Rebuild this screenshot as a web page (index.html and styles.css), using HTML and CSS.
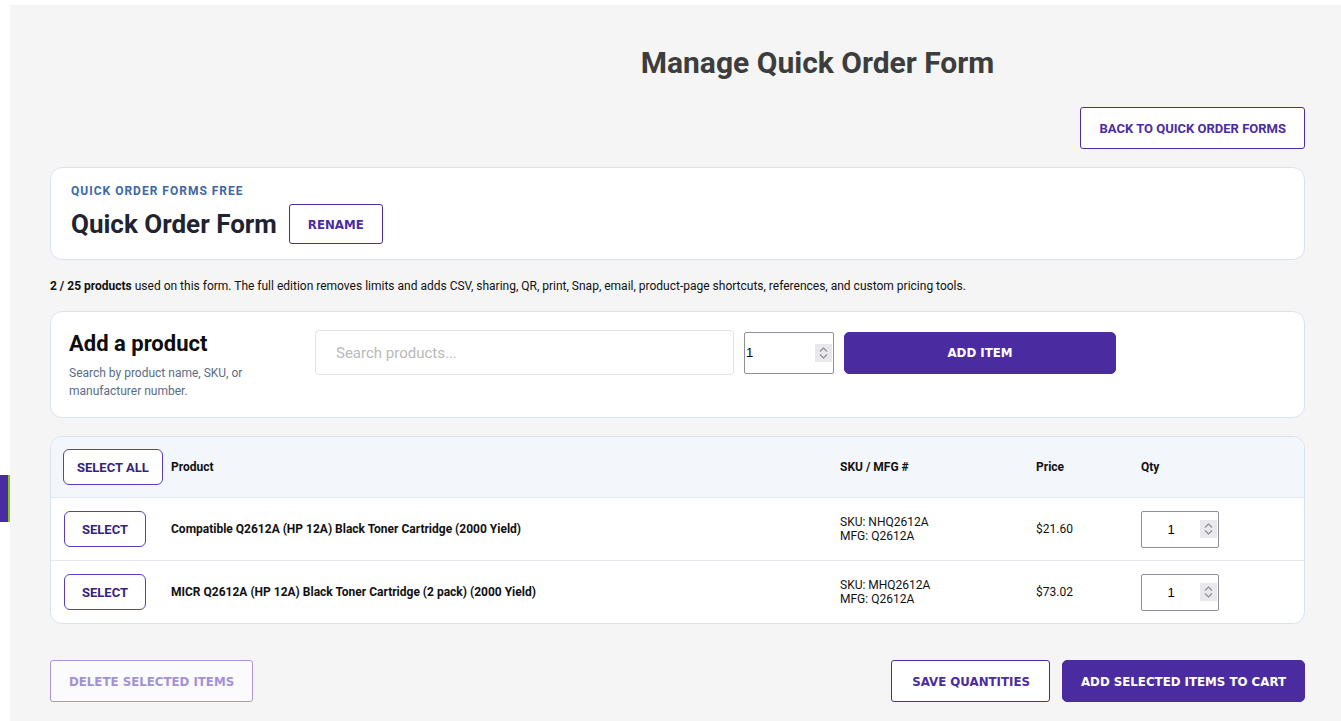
FILE: index.html
```html
<!DOCTYPE html>
<html lang="en">
<head>
<meta charset="utf-8">
<title>Manage Quick Order Form</title>
<link rel="stylesheet" href="styles.css">
</head>
<body>
<div class="side-tab"></div>
<main class="page">
  <h1 class="page-title">Manage Quick Order Form</h1>
  <div class="toolbar">
    <button class="btn btn-outline btn-roboto btn-back">BACK TO QUICK ORDER FORMS</button>
  </div>

  <section class="card form-card">
    <div class="eyebrow">QUICK ORDER FORMS FREE</div>
    <div class="form-title-row">
      <h2 class="form-title">Quick Order Form</h2>
      <button class="btn btn-outline btn-rename">RENAME</button>
    </div>
  </section>

  <p class="usage"><strong>2 / 25 products</strong> used on this form. The full edition removes limits and adds CSV, sharing, QR, print, Snap, email, product-page shortcuts, references, and custom pricing tools.</p>

  <section class="card add-card">
    <div class="add-intro">
      <h2 class="add-title">Add a product</h2>
      <p class="add-sub">Search by product name, SKU, or manufacturer number.</p>
    </div>
    <div class="add-controls">
      <input class="search-input" type="text" placeholder="Search products...">
      <span class="qty-wrap">
        <input class="qty-input qty-add" type="number" value="1" min="1">
        <span class="spin"><svg width="17" height="18" viewBox="0 0 17 18"><polyline points="5,7.5 8.5,4 12,7.5" fill="none" stroke="#8d8d93" stroke-width="1.2"/><polyline points="5,10.5 8.5,14 12,10.5" fill="none" stroke="#8d8d93" stroke-width="1.2"/></svg></span>
      </span>
      <button class="btn btn-solid btn-add">ADD ITEM</button>
    </div>
  </section>

  <section class="card table-card">
    <div class="trow thead">
      <div class="cell"><button class="btn btn-select btn-select-all">SELECT ALL</button></div>
      <div class="cell th">Product</div>
      <div class="cell th">SKU / MFG #</div>
      <div class="cell th">Price</div>
      <div class="cell th">Qty</div>
    </div>
    <div class="trow">
      <div class="cell"><button class="btn btn-select btn-select-row">SELECT</button></div>
      <div class="cell pname">Compatible Q2612A (HP 12A) Black Toner Cartridge (2000 Yield)</div>
      <div class="cell sku">SKU: NHQ2612A<br>MFG: Q2612A</div>
      <div class="cell price">$21.60</div>
      <div class="cell">
        <span class="qty-wrap">
          <input class="qty-input qty-row" type="number" value="1" min="1">
          <span class="spin"><svg width="17" height="18" viewBox="0 0 17 18"><polyline points="5,7.5 8.5,4 12,7.5" fill="none" stroke="#8d8d93" stroke-width="1.2"/><polyline points="5,10.5 8.5,14 12,10.5" fill="none" stroke="#8d8d93" stroke-width="1.2"/></svg></span>
        </span>
      </div>
    </div>
    <div class="trow">
      <div class="cell"><button class="btn btn-select btn-select-row">SELECT</button></div>
      <div class="cell pname">MICR Q2612A (HP 12A) Black Toner Cartridge (2 pack) (2000 Yield)</div>
      <div class="cell sku">SKU: MHQ2612A<br>MFG: Q2612A</div>
      <div class="cell price">$73.02</div>
      <div class="cell">
        <span class="qty-wrap">
          <input class="qty-input qty-row" type="number" value="1" min="1">
          <span class="spin"><svg width="17" height="18" viewBox="0 0 17 18"><polyline points="5,7.5 8.5,4 12,7.5" fill="none" stroke="#8d8d93" stroke-width="1.2"/><polyline points="5,10.5 8.5,14 12,10.5" fill="none" stroke="#8d8d93" stroke-width="1.2"/></svg></span>
        </span>
      </div>
    </div>
  </section>

  <div class="footer-actions">
    <button class="btn btn-disabled">DELETE SELECTED ITEMS</button>
    <div class="footer-right">
      <button class="btn btn-outline btn-save">SAVE QUANTITIES</button>
      <button class="btn btn-solid btn-cart">ADD SELECTED ITEMS TO CART</button>
    </div>
  </div>
</main>
</body>
</html>
```
FILE: styles.css
```css
* { box-sizing: border-box; }

html, body {
  margin: 0;
  background: #ffffff;
}

body {
  font-family: Roboto, "Liberation Sans", Arial, sans-serif;
  color: #111111;
}

.side-tab {
  position: fixed;
  left: 0;
  top: 475px;
  width: 10px;
  height: 47px;
  background: #4b2ca0;
  border-right: 2px solid #8cc21e;
}

.page {
  margin: 5px 0 0 10px;
  background: #f5f5f5;
  min-height: 716px;
  padding: 40px 36px 20px 40px;
}

.page-title {
  margin: 0;
  padding-left: 280px;
  text-align: center;
  font-size: 30px;
  line-height: 36px;
  font-weight: 700;
  color: #3d3d3d;
}

.toolbar {
  display: flex;
  justify-content: flex-end;
  margin-top: 26px;
}

/* Buttons */
.btn {
  font-family: "DejaVu Sans", Verdana, sans-serif;
  font-weight: 700;
  font-size: 11.8px;
  line-height: 1;
  cursor: pointer;
  border-radius: 3px;
  padding: 3px 18px 0 18px;
  white-space: nowrap;
}

.btn-roboto {
  font-family: Roboto, "Liberation Sans", sans-serif;
  font-size: 13px;
}

.btn-outline {
  background: #ffffff;
  border: 1px solid #4b2ca0;
  color: #4b2ca0;
}

.btn-solid {
  background: #4b2ca0;
  border: 1px solid #4b2ca0;
  color: #ffffff;
  border-radius: 5px;
}

.btn-back {
  height: 42px;
  padding: 0 18px 0 19px;
}

/* Cards */
.card {
  background: #ffffff;
  border: 1px solid #d9e2ef;
  border-radius: 12px;
}

.form-card {
  margin-top: 18px;
  padding: 15px 20px 15px 20px;
}

.eyebrow {
  font-size: 12px;
  line-height: 16px;
  font-weight: 700;
  letter-spacing: 1px;
  color: #3d68a6;
}

.form-title-row {
  display: flex;
  align-items: center;
  gap: 12px;
  margin-top: 5px;
}

.form-title {
  margin: 0;
  font-size: 26px;
  line-height: 32px;
  font-weight: 700;
  color: #1f2430;
}

.btn-rename {
  height: 40px;
  color: #4b2ca0;
}

.usage {
  margin: 18px 0 17px 0;
  font-size: 12px;
  line-height: 16px;
  color: #111111;
}

.usage strong { font-weight: 700; }

/* Add product */
.add-card {
  display: flex;
  gap: 20px;
  padding: 18px 20px 17px 18px;
}

.add-intro {
  width: 226px;
  flex: 0 0 226px;
}

.add-title {
  margin: 1px 0 0 0;
  font-size: 22px;
  line-height: 26px;
  font-weight: 700;
  color: #0d0d0d;
}

.add-sub {
  margin: 7px 0 0 0;
  font-size: 12px;
  line-height: 18px;
  color: #5b6b86;
}

.add-controls {
  display: flex;
  align-items: center;
  gap: 10px;
  height: 45px;
}

.search-input {
  width: 419px;
  height: 45px;
  border: 1px solid #e3e3e3;
  border-radius: 4px;
  padding: 0 20px;
  font-family: Roboto, "Liberation Sans", sans-serif;
  font-size: 15px;
  color: #222222;
  background: #ffffff;
  outline: none;
}

.search-input::placeholder {
  color: #b9b9b9;
}

.qty-wrap {
  position: relative;
  display: inline-block;
  line-height: 0;
}

.spin {
  position: absolute;
  right: 2px;
  top: 50%;
  margin-top: -9px;
  width: 17px;
  height: 18px;
  background: #e9e9ed;
  pointer-events: none;
}

.spin svg { display: block; }

.qty-input {
  height: 42px;
  border: 1px solid #8f8f9d;
  border-radius: 2px;
  background: #ffffff;
  font-family: "Liberation Sans", Arial, sans-serif;
  font-size: 13px;
  color: #000000;
  -moz-appearance: textfield;
}

.qty-input::-webkit-inner-spin-button,
.qty-input::-webkit-outer-spin-button {
  -webkit-appearance: none;
  margin: 0;
}

.qty-add {
  width: 90px;
  padding: 0 20px 0 1px;
}

.btn-add {
  width: 272px;
  height: 42px;
}

/* Table */
.table-card {
  margin-top: 18px;
  overflow: hidden;
}

.trow {
  display: grid;
  grid-template-columns: 108px 669px 196px 105px 1fr;
  align-items: center;
  padding-left: 12px;
  height: 63px;
  border-top: 1px solid #e4e9f1;
}

.thead {
  height: 60px;
  border-top: 0;
  background: #f3f6fb;
}

.cell {
  font-size: 12px;
  line-height: 14px;
}

.th {
  font-weight: 700;
  color: #111111;
}

.btn-select {
  font-family: Roboto, "Liberation Sans", sans-serif;
  font-size: 13px;
  height: 36px;
  background: #ffffff;
  border: 1px solid #5a3cc6;
  border-radius: 6px;
  color: #35237a;
}

.btn-select-all {
  padding: 0 13px;
}

.btn-select-row {
  margin-left: 1px;
  padding: 0 17px;
}

.pname {
  font-weight: 700;
  color: #111111;
}

.sku, .price {
  color: #111111;
}

.qty-row {
  width: 78px;
  height: 37px;
  text-align: center;
  padding: 0 20px 0 2px;
}

/* Footer */
.footer-actions {
  display: flex;
  justify-content: space-between;
  align-items: center;
  margin-top: 36px;
}

.footer-right {
  display: flex;
  gap: 12px;
}

.btn-disabled {
  height: 42px;
  background: #fbfafd;
  border: 1px solid #a996d8;
  color: #a292d3;
}

.btn-save {
  height: 42px;
  padding: 3px 19px 0 20px;
}

.btn-cart {
  height: 42px;
}
```
